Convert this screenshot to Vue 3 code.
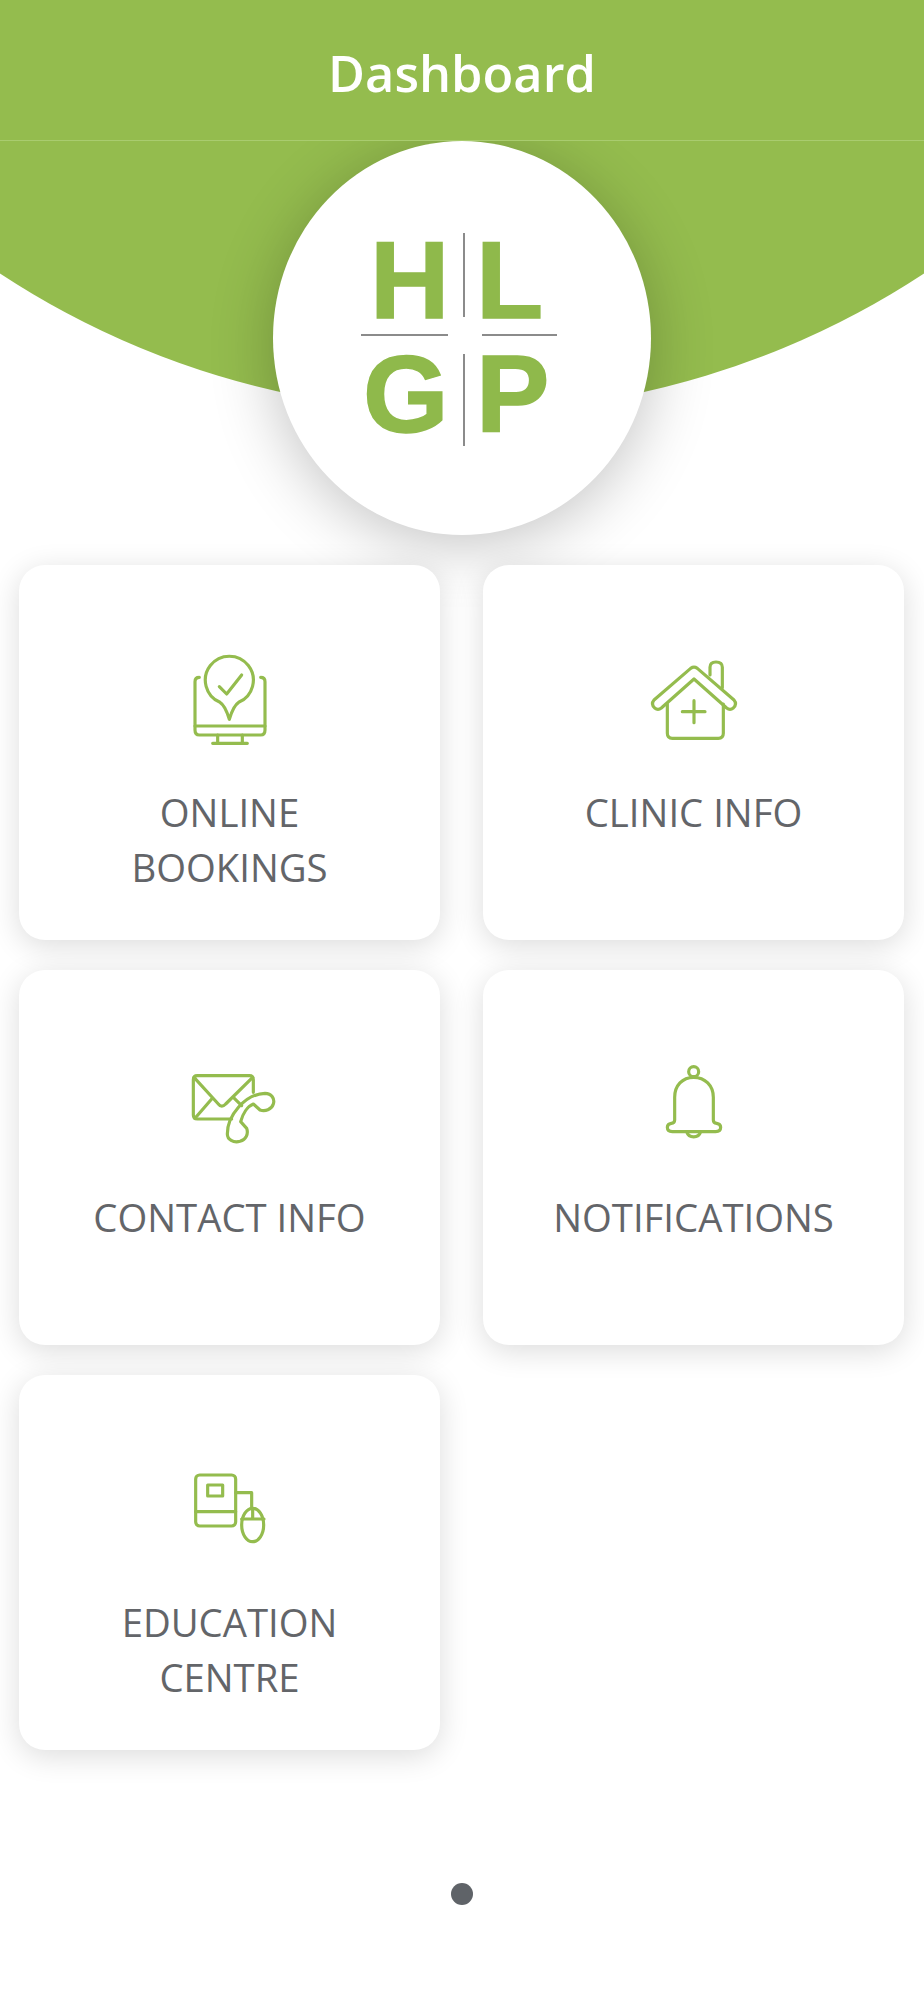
<template>
  <div class="page">
    <header class="topbar">Dashboard</header>

    <section class="hero">
      <div class="arc" />
      <div class="logo">
        <svg class="logo-mark" viewBox="0 0 240 250">
          <text x="29" y="108" class="letter">H</text>
          <text x="135" y="108" class="letter">L</text>
          <text x="22" y="222" class="letter">G</text>
          <text x="135" y="222" class="letter">P</text>
          <path class="rule" d="M123 23V107M123 144V236M20 125H107M141 125H216" />
        </svg>
      </div>
    </section>

    <main class="tiles">
      <a v-for="tile in tiles" :key="tile.id" class="tile">
        <svg class="tile-icon" :viewBox="tile.box">
          <g v-if="tile.id === 'bookings'">
            <path d="M88 112Q75 112 75 125V270Q75 285 88 285H272Q285 285 285 270V125Q285 112 272 112" />
            <path d="M75 258H285M143 285V310M217 285V310M128 310H232" />
            <path d="M150 187A72 72 0 1 1 206 187Q190 197 178 238Q166 197 150 187Z" />
            <path d="M148 140L170 162L215 105" />
          </g>
          <g v-else-if="tile.id === 'clinic'">
            <path d="M170 85Q180 78 190 85L300 180Q310 192 298 204Q288 212 278 204L180 117L82 204Q72 212 62 204Q50 192 60 180Z" />
            <path d="M100 192V280Q100 295 115 295H253Q268 295 268 280V192" />
            <path d="M228 105V82Q228 66 246 66Q265 66 265 82V143" />
            <path d="M180 182V248M145 215H213" />
          </g>
          <g v-else-if="tile.id === 'contact'">
            <path d="M250 130V92Q250 80 238 80H82Q70 80 70 92V198Q70 210 82 210H185" />
            <path d="M72 85L145 165Q155 178 167 165L248 85M125 150L75 208M190 145L215 170" />
            <path d="M172 255C172 200 225 135 285 133C305 133 315 150 310 165C305 182 285 188 270 183L250 165C232 172 218 195 212 218L230 238C236 255 228 272 210 277C190 282 172 272 172 255Z" />
          </g>
          <g v-else-if="tile.id === 'notifications'">
            <circle cx="179" cy="68" r="15" />
            <path d="M122 145V213Q122 222 112 223Q100 225 100 235Q100 248 115 248H245Q260 248 260 235Q260 225 248 223Q238 222 238 213V145C238 110 213 85 179 85C145 85 122 110 122 145Z" />
            <path d="M158 248A22 22 0 0 0 200 248" />
          </g>
          <g v-else>
            <rect x="77" y="75" width="120" height="153" rx="12" />
            <rect x="113" y="105" width="45" height="33" />
            <path d="M77 185H197M197 128H245V172M215 207H282M248 175V207" />
            <ellipse cx="248" cy="225" rx="33" ry="50" />
          </g>
        </svg>
        <span class="tile-label">{{ tile.label }}</span>
      </a>
    </main>

    <div class="pager"><span class="pager-dot" /></div>
  </div>
</template>

<script setup>
const tiles = [
  { id: "bookings", label: "ONLINE BOOKINGS", box: "0 0 360 360" },
  { id: "clinic", label: "CLINIC INFO", box: "0 0 360 360" },
  { id: "contact", label: "CONTACT INFO", box: "0 -12 360 360" },
  { id: "notifications", label: "NOTIFICATIONS", box: "0 -12 360 360" },
  { id: "education", label: "EDUCATION CENTRE", box: "0 0 360 360" },
];
</script>

<style>
body {
  background: #fff;
}
</style>

<style scoped>
.page {
  width: 924px;
  min-height: 2000px;
  overflow: hidden;
  font-family: "Open Sans", sans-serif;
}

.topbar {
  position: relative;
  z-index: 2;
  height: 140px;
  border-bottom: 1px solid #a9cc6f;
  background: #94bc4e;
  color: #fff;
  font-size: 50.5px;
  font-weight: 600;
  line-height: 146px;
  text-align: center;
}

.hero {
  position: relative;
  display: flex;
  justify-content: center;
  height: 424px;
}

.arc {
  position: absolute;
  left: -378px;
  bottom: 153px;
  width: 1680px;
  height: 1680px;
  border-radius: 50%;
  background: #94bc4e;
}

.logo {
  position: relative;
  width: 378px;
  height: 394px;
  margin-left: -1px;
  border-radius: 50%;
  background: #fff;
  box-shadow: 0 10px 64px rgba(0, 0, 0, 0.24);
}

.logo-mark {
  position: absolute;
  left: 68px;
  top: 69px;
  width: 240px;
  height: 250px;
}

.letter {
  fill: #8fb94b;
  stroke: #8fb94b;
  stroke-width: 1.5;
  font-family: "Liberation Sans", sans-serif;
  font-size: 110px;
  font-weight: 700;
}

.rule {
  fill: none;
  stroke: #666;
  stroke-width: 1.5;
}

.tiles {
  position: relative;
  display: grid;
  grid-template-columns: 421px 421px;
  grid-auto-rows: 375px;
  column-gap: 43px;
  row-gap: 30px;
  padding: 0 20px 0 19px;
}

.tile {
  display: flex;
  flex-direction: column;
  align-items: center;
  padding: 75px 60px 0;
  border-radius: 26px;
  background: #fff;
  box-shadow: 0 6px 30px rgba(0, 0, 0, 0.14);
  color: #636569;
  text-align: center;
}

.tile-icon {
  flex: none;
  width: 120px;
  height: 120px;
  margin-bottom: 25px;
  fill: none;
  stroke: #94bc4e;
  stroke-width: 9.5;
  stroke-linecap: round;
  stroke-linejoin: round;
}

.tile-label {
  font-size: 38.3px;
  line-height: 55px;
}

.pager {
  display: flex;
  justify-content: center;
  margin-top: 133px;
}

.pager-dot {
  width: 22px;
  height: 22px;
  margin-left: -1px;
  border-radius: 50%;
  background: #5f6368;
}
</style>
